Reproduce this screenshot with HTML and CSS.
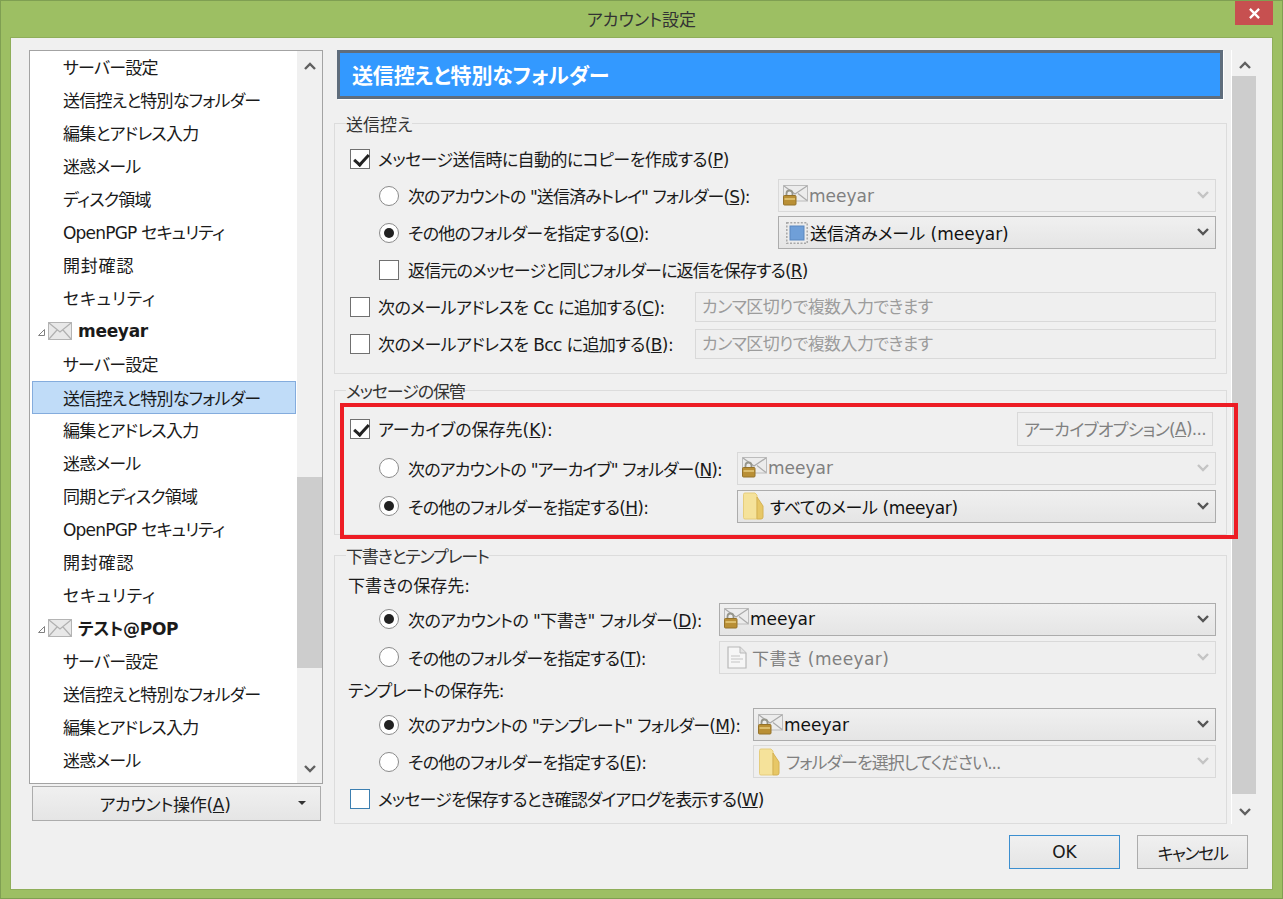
FILE: index.html
```html
<!DOCTYPE html>
<html lang="ja">
<head>
<meta charset="utf-8">
<title>アカウント設定</title>
<link rel="stylesheet" href="styles.css">
</head>
<body>
<svg class="defs" width="0" height="0" aria-hidden="true">
  <symbol id="chev-up" viewBox="0 0 12 8"><path d="M1 7 6 2l5 5" fill="none" stroke="currentColor" stroke-width="2.4"/></symbol>
  <symbol id="chev-down" viewBox="0 0 12 8"><path d="M1 1l5 5 5-5" fill="none" stroke="currentColor" stroke-width="2.4"/></symbol>
  <symbol id="env" viewBox="0 0 24 18"><rect x=".5" y=".5" width="23" height="17" fill="#e8e8e8" stroke="#b4b4b4"/><path d="M1 1l11 9 11-9M1 17l8-9M23 17l-8-9" fill="none" stroke="#b0b0b0" stroke-width="1.2"/></symbol>
  <symbol id="env-lock" viewBox="0 0 25 22"><rect x=".5" y=".5" width="24" height="15.500" fill="#ececec" stroke="#bcbcbc"/><path d="M1 1l11 8 12-8M24 15.500l-9-7" fill="none" stroke="#aaa" stroke-width="1.2"/><path d="M3.500 11V8.500a3 3 0 0 1 6 0V11" fill="none" stroke="#96968c" stroke-width="1.800"/><rect x=".5" y="10.500" width="12.500" height="9.500" rx="1" fill="#b98f35" stroke="#94722a"/><rect x="1.500" y="13" width="10.500" height="2" fill="#dcbd6c"/></symbol>
  <symbol id="folder" viewBox="0 0 21 28"><path d="M2 1h10l2 2v24H2a1.500 1.500 0 0 1-1.500-1.500v-23A1.500 1.500 0 0 1 2 1z" fill="#f5e29a" stroke="#e6cd7c"/><path d="M14 5l6 9v11a2 2 0 0 1-2 2h-4z" fill="#e7c766" stroke="#d5b252"/></symbol>
  <symbol id="doc" viewBox="0 0 20 23"><path d="M1 1h12l6 6v15H1z" fill="#f6f6f6" stroke="#b8b8b8" stroke-width="1.200"/><path d="M13 1v6h6" fill="#e4e4e4" stroke="#b8b8b8"/><path d="M4 10h9M4 13h12M4 16h9" stroke="#c4c4c4" fill="none"/></symbol>
  <symbol id="sent" viewBox="0 0 22 22"><rect x=".8" y=".8" width="20.400" height="20.400" fill="#ececec" stroke="#a8a8a8" stroke-dasharray="2 1.500" stroke-width="1.500"/><rect x="4" y="4" width="14" height="14" fill="#6f9fd8" stroke="#5a87bf"/></symbol>
  <symbol id="twisty" viewBox="0 0 9 9"><path d="M7.500 1.500v6h-6z" fill="#fff" stroke="#808080"/></symbol>
</svg>

<div class="window">
  <header class="titlebar">
    <span class="title">アカウント設定</span>
    <span class="close"><svg viewBox="0 0 12 12" width="11" height="11"><path d="M1 1l10 10M11 1 1 11" stroke="#fff" stroke-width="2.500"/></svg></span>
  </header>

  <div class="client">
    <aside class="side">
      <div class="tree-box">
        <ul class="tree">
          <li class="item">サーバー設定</li>
          <li class="item">送信控えと特別なフォルダー</li>
          <li class="item">編集とアドレス入力</li>
          <li class="item">迷惑メール</li>
          <li class="item">ディスク領域</li>
          <li class="item">OpenPGP セキュリティ</li>
          <li class="item wide">開封確認</li>
          <li class="item wide">セキュリティ</li>
          <li class="account"><svg class="twisty"><use href="#twisty"/></svg><svg class="acc-icon"><use href="#env"/></svg><b>meeyar</b></li>
          <li class="item">サーバー設定</li>
          <li class="item selected">送信控えと特別なフォルダー</li>
          <li class="item">編集とアドレス入力</li>
          <li class="item">迷惑メール</li>
          <li class="item">同期とディスク領域</li>
          <li class="item">OpenPGP セキュリティ</li>
          <li class="item wide">開封確認</li>
          <li class="item wide">セキュリティ</li>
          <li class="account"><svg class="twisty"><use href="#twisty"/></svg><svg class="acc-icon"><use href="#env"/></svg><b>テスト@POP</b></li>
          <li class="item">サーバー設定</li>
          <li class="item">送信控えと特別なフォルダー</li>
          <li class="item">編集とアドレス入力</li>
          <li class="item">迷惑メール</li>
        </ul>
        <div class="vscroll side-scroll">
          <svg class="arrow"><use href="#chev-up"/></svg>
          <div class="track"><div class="thumb side-thumb"></div></div>
          <svg class="arrow"><use href="#chev-down"/></svg>
        </div>
      </div>
      <div class="btn account-btn"><span>アカウント操作(<u>A</u>)</span><i class="menu-tri"></i></div>
    </aside>

    <div class="right">
      <div class="pane">
        <main class="main">
          <h1 class="banner">送信控えと特別なフォルダー</h1>

          <fieldset class="group g1">
            <legend>送信控え</legend>
            <div class="row"><i class="check on"></i><span class="ls6">メッセージ送信時に自動的にコピーを作成する(<u>P</u>)</span></div>
            <div class="row sub"><i class="radio"></i><span class="lbl ls9">次のアカウントの "送信済みトレイ" フォルダー(<u>S</u>):</span>
              <div class="combo off w438"><svg class="ic il"><use href="#env-lock"/></svg><span>meeyar</span><svg class="dd"><use href="#chev-down"/></svg></div></div>
            <div class="row sub"><i class="radio on"></i><span class="lbl ls7">その他のフォルダーを指定する(<u>O</u>):</span>
              <div class="combo w438"><svg class="ic is"><use href="#sent"/></svg><span>送信済みメール (meeyar)</span><svg class="dd"><use href="#chev-down"/></svg></div></div>
            <div class="row sub"><i class="check"></i><span class="ls8">返信元のメッセージと同じフォルダーに返信を保存する(<u>R</u>)</span></div>
            <div class="row"><i class="check"></i><span class="lbl ls6">次のメールアドレスを Cc に追加する(<u>C</u>):</span>
              <div class="input w521">カンマ区切りで複数入力できます</div></div>
            <div class="row"><i class="check"></i><span class="lbl ls6">次のメールアドレスを Bcc に追加する(<u>B</u>):</span>
              <div class="input w521">カンマ区切りで複数入力できます</div></div>
          </fieldset>

          <fieldset class="group g2">
            <legend class="tight">メッセージの保管</legend>
            <div class="row"><i class="check on"></i><span class="lbl">アーカイブの保存先(<u>K</u>):</span>
              <div class="btn archive-btn">アーカイブオプション(<u>A</u>)...</div></div>
            <div class="row sub tall"><i class="radio"></i><span class="lbl ls8">次のアカウントの "アーカイブ" フォルダー(<u>N</u>):</span>
              <div class="combo off w479"><svg class="ic il"><use href="#env-lock"/></svg><span>meeyar</span><svg class="dd"><use href="#chev-down"/></svg></div></div>
            <div class="row sub tall"><i class="radio on"></i><span class="lbl ls7">その他のフォルダーを指定する(<u>H</u>):</span>
              <div class="combo w479"><svg class="ic if"><use href="#folder"/></svg><span class="ls4">すべてのメール (meeyar)</span><svg class="dd"><use href="#chev-down"/></svg></div></div>
          </fieldset>

          <fieldset class="group g3">
            <legend class="tight">下書きとテンプレート</legend>
            <div class="caption first">下書きの保存先:</div>
            <div class="row sub tall"><i class="radio on"></i><span class="lbl ls6">次のアカウントの "下書き" フォルダー(<u>D</u>):</span>
              <div class="combo w497"><svg class="ic il"><use href="#env-lock"/></svg><span>meeyar</span><svg class="dd"><use href="#chev-down"/></svg></div></div>
            <div class="row sub tall"><i class="radio"></i><span class="lbl ls7">その他のフォルダーを指定する(<u>T</u>):</span>
              <div class="combo off w497"><svg class="ic id"><use href="#doc"/></svg><span class="loose">下書き (meeyar)</span><svg class="dd"><use href="#chev-down"/></svg></div></div>
            <div class="caption ls7">テンプレートの保存先:</div>
            <div class="row sub"><i class="radio on"></i><span class="lbl ls7">次のアカウントの "テンプレート" フォルダー(<u>M</u>):</span>
              <div class="combo w463"><svg class="ic il"><use href="#env-lock"/></svg><span>meeyar</span><svg class="dd"><use href="#chev-down"/></svg></div></div>
            <div class="row sub"><i class="radio"></i><span class="lbl ls7">その他のフォルダーを指定する(<u>E</u>):</span>
              <div class="combo off w463"><svg class="ic if"><use href="#folder"/></svg><span class="ls10">フォルダーを選択してください...</span><svg class="dd"><use href="#chev-down"/></svg></div></div>
            <div class="row"><i class="check focus"></i><span class="ls9">メッセージを保存するとき確認ダイアログを表示する(<u>W</u>)</span></div>
          </fieldset>

          <div class="highlight"></div>
        </main>
        <div class="vscroll main-scroll">
          <svg class="arrow"><use href="#chev-up"/></svg>
          <div class="track"><div class="thumb main-thumb"></div></div>
          <svg class="arrow"><use href="#chev-down"/></svg>
        </div>
      </div>
      <footer class="actions">
        <div class="btn dlg default">OK</div>
        <div class="btn dlg cancel">キャンセル</div>
      </footer>
    </div>
  </div>
</div>
</body>
</html>
```

FILE: styles.css
```css
* { box-sizing: border-box; }
html, body { margin: 0; height: 100%; }
body {
  font-family: "DejaVu Sans", "Noto Sans CJK JP", sans-serif;
  font-size: 17px;
  font-feature-settings: "palt";
  color: #1a1a1a;
  background: #9dbf63;
  overflow: hidden;
}
.defs { position: absolute; }
.ls4 { letter-spacing: -.4px; }
.ls6 { letter-spacing: -.58px; }
.ls7 { letter-spacing: -.7px; }
.ls8 { letter-spacing: -.84px; }
.ls9 { letter-spacing: -.92px; }
.ls10 { letter-spacing: -.95px; }
.loose { letter-spacing: .4px; }
.window {
  width: 1283px;
  height: 899px;
  border: 1px solid #7f9f52;
  display: flex;
  flex-direction: column;
  padding: 0 10px 9px;
}
.titlebar {
  height: 37px;
  flex: none;
  display: flex;
  align-items: flex-start;
  justify-content: center;
  position: relative;
}
.title { line-height: 38px; color: #333; }
.close {
  position: absolute;
  right: -1px;
  top: 0;
  width: 38px;
  height: 24px;
  background: #c75050;
  display: flex;
  align-items: center;
  justify-content: center;
}
.client {
  flex: 1;
  background: #f0f0f0;
  outline: 1px solid #8fae5a;
  display: flex;
  gap: 11px;
  padding: 12px 0 0 18px;
}
.side { width: 294px; flex: none; display: flex; flex-direction: column; }
.tree-box {
  height: 734px;
  border: 1px solid #a3a3a3;
  background: #fff;
  display: flex;
  overflow: hidden;
}
.tree { list-style: none; margin: -1px 0 0; padding: 0; flex: 1; min-width: 0; }
.tree li { height: 33px; display: flex; align-items: center; white-space: nowrap; }
.item { padding-left: 31px; margin: 0 1px 0 2px; letter-spacing: -.8px; }
.item.wide { letter-spacing: .8px; }
.tree .item.selected {
  background: #c0dcf8;
  border: 1px solid #84acdd;
  padding: 0 0 1px 30px;
  margin-top: 1px;
  margin-bottom: -1px;
}
.account { padding-left: 7px; }
.account b { font-weight: 700; margin-left: 6px; letter-spacing: -.3px; }
.twisty { width: 9px; height: 9px; margin: 4px 2px 0 0; flex: none; }
.acc-icon { width: 24px; height: 18px; }
.vscroll { flex: none; display: flex; flex-direction: column; align-items: center; color: #606060; background: #f0f0f0; }
.vscroll .arrow { width: 12px; height: 8px; flex: none; }
.track { flex: 1; width: 100%; }
.thumb { background: #cdcdcd; }
.side-scroll { width: 25px; padding-top: 11px; padding-bottom: 10px; }
.side-thumb { height: 191px; margin-top: 407px; }
.account-btn {
  margin: 2px 2px 0 3px;
  height: 35px;
  justify-content: center;
  position: relative;
  letter-spacing: -.3px;
}
.btn {
  display: flex;
  align-items: center;
  border: 1px solid #acacac;
  background: linear-gradient(#f0f0f0, #e5e5e5);
  white-space: nowrap;
}
.menu-tri {
  position: absolute;
  right: 14px;
  top: 14px;
  border-style: solid;
  border-width: 4px 4px 0;
  border-color: #333 transparent transparent;
}
.account-btn span { margin-right: 23px; }
.right { flex: 1; min-width: 0; display: flex; flex-direction: column; }
.pane { display: flex; height: 774px; flex: none; }
.main { width: 893px; flex: none; position: relative; }
.banner {
  margin: 0 4px 0 3px;
  height: 49px;
  border: 3px solid #5f6d7c;
  box-shadow: 1px 1px 0 #fff;
  background: #3399ff;
  color: #fff;
  font-size: 21px;
  font-weight: 700;
  line-height: 47px;
  padding-left: 12px;
  overflow: hidden;
  letter-spacing: -.15px;
}
.group {
  margin: 0;
  border: 1px solid #dcdcdc;
  padding: 0 0 0 15px;
  min-width: 0;
}
.group legend {
  padding: 4px 0 0;
  margin-left: -4px;
  line-height: 22px;
  color: #333;
}
.group legend.tight { letter-spacing: -1.15px; }
.g1 { margin-top: 11px; height: 264px; }
.g1 .row:first-of-type { margin-top: 4px; }
.g2 { margin-top: 3px; height: 158px; }
.g2 .row:first-of-type { margin-top: 7px; margin-bottom: 2px; }
.g3 { margin-top: 7px; height: 282px; padding-top: 4px; }
.row { height: 37px; display: flex; align-items: center; white-space: nowrap; padding-right: 10px; }
.row.tall { height: 38px; }
.sub { padding-left: 29px; }
.caption { height: 30px; line-height: 30px; margin-left: -2px; }
.caption.first { height: 28px; line-height: 28px; }
.lbl { margin-right: auto; }
.check, .radio {
  flex: none;
  width: 20px;
  height: 20px;
  margin-right: 8px;
  border: 1px solid #707070;
  background: #fff;
  position: relative;
}
.sub .check, .sub .radio { margin-right: 9px; }
.radio { border-radius: 50%; border-color: #8a8a8a; }
.radio.on::after {
  content: "";
  position: absolute;
  left: 4px; top: 4px;
  width: 10px; height: 10px;
  border-radius: 50%;
  background: #222;
}
.check.on::after {
  content: "";
  position: absolute;
  width: 6px; height: 12px;
  left: 6px; top: 1px;
  border: solid #222;
  border-width: 0 3px 3px 0;
  transform: rotate(42deg);
}
.check.focus { border-color: #3c7fb1; }
.combo {
  height: 33px;
  flex: none;
  display: flex;
  align-items: center;
  border: 1px solid #acacac;
  background: linear-gradient(#f0f0f0, #e5e5e5);
  position: relative;
  color: #111;
  padding-left: 4px;
}
.combo.off { background: #efefef; border-color: #d9d9d9; color: #808080; }
.w438 { width: 438px; }
.w479 { width: 479px; }
.w497 { width: 497px; }
.w463 { width: 463px; }
.w521 { width: 521px; }
.ic { flex: none; margin-right: 1px; }
.il { width: 25px; height: 22px; margin-left: 0; }
.is { width: 22px; height: 22px; margin: 0 2px 0 3px; }
.if { width: 21px; height: 28px; margin: 0 6px 0 1px; }
.id { width: 20px; height: 23px; margin: 0 5px 0 3px; }
.dd {
  position: absolute;
  right: 6px;
  top: 11px;
  width: 12px;
  height: 8px;
  color: #555;
}
.off .dd { color: #c4c4c4; }
.input {
  height: 30px;
  border: 1px solid #d9d9d9;
  background: #efefef;
  color: #9c9c9c;
  line-height: 28px;
  padding-left: 6px;
  flex: none;
  letter-spacing: -.6px;
}
.archive-btn {
  width: 196px;
  height: 34px;
  justify-content: center;
  margin-right: 3px;
  background: #efefef;
  border-color: #d9d9d9;
  color: #808080;
  letter-spacing: -.7px;
}
.highlight {
  position: absolute;
  left: 6px;
  top: 353px;
  width: 898px;
  height: 136px;
  border: 4px solid #ed1c24;
  pointer-events: none;
}
.main-scroll {
  width: 26px;
  margin-left: 4px;
  border-left: 1px solid #fff;
  padding: 11px 0 8px;
}
.main-scroll .track { padding-top: 7px; }
.main-thumb { height: 718px; width: 24px; }
.actions {
  display: flex;
  gap: 17px;
  padding: 11px 0 0 675px;
}
.dlg { width: 111px; height: 34px; justify-content: center; }
.default { border-color: #3c8fd0; }
.cancel { letter-spacing: -1.4px; }
```
